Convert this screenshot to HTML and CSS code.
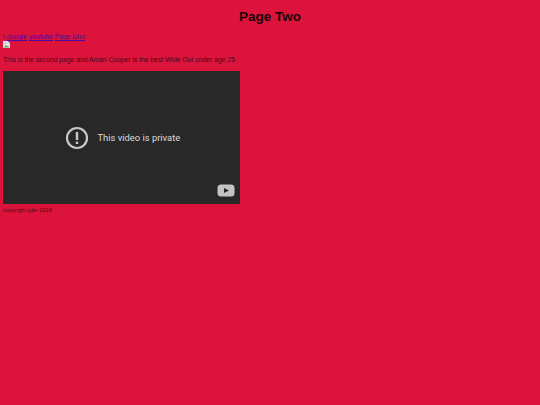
FILE: index.html
```html
<!DOCTYPE html>
<html lang="en">
<head>
<meta charset="UTF-8">
<title>Page Two</title>
<link rel="stylesheet" href="styles.css">
</head>
<body>
    <h1>Page Two</h1>
    <div class="links">\ <a href="#">google</a> <a href="#">youtube</a> <a href="#">Page Uno</a></div>
    <svg class="broken-img" width="7" height="7" viewBox="0 0 16 16">
        <path d="M0 0h11l5 5v11H0z" fill="#e4e8ec"/>
        <path d="M1 15l5-6 3 3 2-2 4 5z" fill="#6f9f5c"/>
        <path d="M1 1h9v6H1z" fill="#c3d6ee"/>
    </svg>
    <p class="intro">This is the second page and Amari Cooper is the best Wide Out under age 25</p>
    <div class="video">
        <div class="video-msg">
            <svg class="alert-icon" width="24" height="24" viewBox="0 0 24 24">
                <circle cx="12" cy="12" r="10" fill="none" stroke="#c8c8c8" stroke-width="2.2"/>
                <rect x="10.8" y="6" width="2.4" height="8" fill="#c8c8c8"/>
                <rect x="10.8" y="15.6" width="2.4" height="2.4" fill="#c8c8c8"/>
            </svg>
            <span>This video is private</span>
        </div>
        <svg class="yt-logo" width="18" height="13" viewBox="0 0 18 13">
            <rect x="0.5" y="0.5" width="17" height="12" rx="3.5" fill="#c4c4c4"/>
            <path d="M7 4l5 2.5L7 9z" fill="#282828"/>
        </svg>
    </div>
    <footer class="copyright">copyright tyler 2016</footer>
</body>
</html>
```

FILE: styles.css
```css
body {
    font-family: "Liberation Sans", Arial, sans-serif;
    background-color: #dc143c;
    color: #4a0a18;
    margin: 0;
    padding: 0 3px;
    font-size: 6.75px;
}
h1 {
    font-size: 13.5px;
    line-height: 16px;
    color: #1a0207;
    text-align: center;
    margin: 0;
    padding-top: 9px;
}
.links {
    margin-top: 8px;
    line-height: 8px;
}
.links a {
    color: #4c08a8;
}
.broken-img {
    display: block;
}
.intro {
    margin: 8px 0 0;
    line-height: 8px;
}
.video {
    position: relative;
    width: 236.5px;
    height: 133px;
    margin-top: 7px;
    background-color: #282828;
    display: flex;
    flex-direction: column;
    justify-content: center;
}
.video-msg {
    display: flex;
    align-items: center;
    gap: 8.5px;
    padding-left: 62px;
    color: #dcdcdc;
    font-family: Roboto, sans-serif;
    font-size: 9.4px;
}
.yt-logo {
    position: absolute;
    right: 5px;
    bottom: 7px;
}
.copyright {
    margin-top: 2.5px;
    font-size: 5.6px;
    line-height: 7px;
}
```
